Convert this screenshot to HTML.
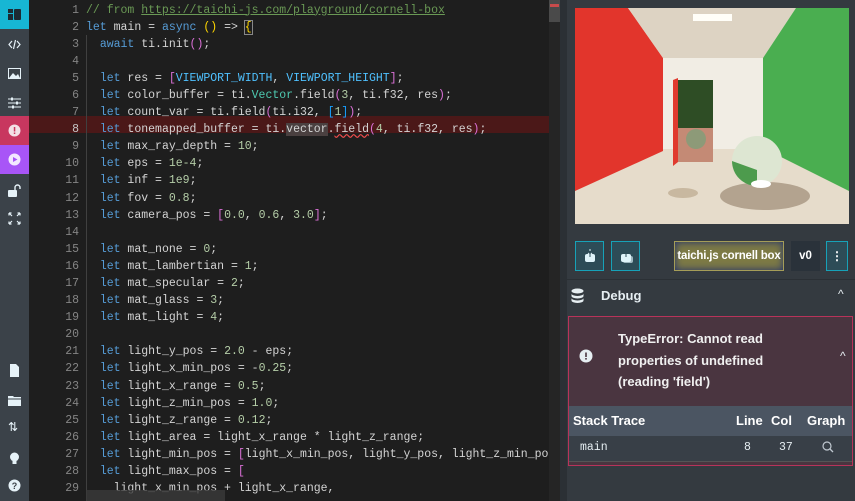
<!DOCTYPE html>
<html><head><meta charset="utf-8"><style>
*{margin:0;padding:0;box-sizing:border-box}
body{width:855px;height:501px;overflow:hidden;background:#1e1e1e;position:relative;font-family:"Liberation Sans",sans-serif}
.side{position:absolute;left:0;top:0;width:29px;height:501px;background:#3b4249}
.tile{position:absolute;left:0;width:29px;height:29px}
.ic{position:absolute;left:8px;width:13px;height:13px;color:#e6f2f8}
.gut{position:absolute;left:29px;top:0;width:50px;height:501px}
.ln{position:absolute;right:0;width:40px;text-align:right;font:11.5px/17.1px "Liberation Mono",monospace;color:#858585}
.code{position:absolute;left:86px;top:1.5px;font:11.5px/17.1px "Liberation Mono",monospace;color:#d4d4d4;white-space:pre}
.k{color:#569cd6}.n{color:#b5cea8}.c{color:#6a9955}.t{color:#4ec9b0}.v{color:#4fc1ff}.y{color:#ffd700}.p{color:#da70d6}.b{color:#179fff}
.panel{position:absolute;left:567px;top:0;width:288px;height:501px;background:#343a40}
.mono{font-family:'Liberation Mono',monospace;font-size:11.5px}
</style></head><body>
<div class="side">
<div class="tile" style="top:0;background:#17b6d4"><svg style="position:absolute;left:8px;top:9px" width="13" height="11"><rect x="0" y="0" width="5" height="4" fill="#1d2a33"/><rect x="0" y="5" width="5" height="6" fill="#1d2a33"/><rect x="6" y="0" width="7" height="11" rx="1" fill="#1d2a33"/></svg></div>
<svg class="ic" style="top:38px" viewBox="0 0 13 13"><path d="M4 3L1 6.5L4 10M9 3L12 6.5L9 10M7.5 2L5.5 11" stroke="#e6f2f8" fill="none" stroke-width="1.2"/></svg>
<svg class="ic" style="top:67px" viewBox="0 0 13 13"><rect x="0.5" y="1.5" width="12" height="10" fill="none" stroke="#e6f2f8"/><path d="M1 11L5 6L8 9L10 7L12 11Z" fill="#e6f2f8"/></svg>
<svg class="ic" style="top:96px" viewBox="0 0 13 13"><path d="M0 3H13M0 7H13M0 11H13" stroke="#e6f2f8"/><rect x="3" y="1.5" width="2" height="3" fill="#e6f2f8"/><rect x="8" y="5.5" width="2" height="3" fill="#e6f2f8"/><rect x="4" y="9.5" width="2" height="3" fill="#e6f2f8"/></svg>
<div class="tile" style="top:116px;background:#c8375f"><svg style="position:absolute;left:8px;top:8px" width="13" height="13"><circle cx="6.5" cy="6.5" r="6" fill="#f3dfe6"/><rect x="5.8" y="3" width="1.5" height="4.5" fill="#c8375f"/><rect x="5.8" y="8.5" width="1.5" height="1.5" fill="#c8375f"/></svg></div>
<div class="tile" style="top:145px;background:#a855f7"><svg style="position:absolute;left:8px;top:8px" width="13" height="13"><circle cx="6.5" cy="6.5" r="6" fill="#f3e8ff"/><path d="M5 4L9.5 6.5L5 9Z" fill="#a855f7"/></svg></div>
<svg class="ic" style="top:184px" viewBox="0 0 13 13"><rect x="0" y="6" width="9" height="7" rx="1" fill="#e6f2f8"/><path d="M7 6V3.5A2.5 2.5 0 0 1 12 3.5V5" stroke="#e6f2f8" fill="none" stroke-width="1.4"/></svg>
<svg class="ic" style="top:212px" viewBox="0 0 13 13"><path d="M1 1L4 4M1 1H3.5M1 1V3.5M12 1L9 4M12 1H9.5M12 1V3.5M1 12L4 9M1 12H3.5M1 12V9.5M12 12L9 9M12 12H9.5M12 12V9.5" stroke="#e6f2f8" fill="none" stroke-width="1.2"/></svg>
<svg class="ic" style="top:364px" viewBox="0 0 13 13"><path d="M2 0H8L11 3V13H2Z" fill="#e6f2f8"/></svg>
<svg class="ic" style="top:394px" viewBox="0 0 13 13"><path d="M0 2H5L6 3H13V12H0Z" fill="#e6f2f8"/><rect x="0" y="4.5" width="13" height="1" fill="#3b4249"/></svg>
<div style="position:absolute;left:8px;top:420px;color:#e6f2f8;font-size:12px">⇅</div>
<svg class="ic" style="top:452px" viewBox="0 0 13 13"><circle cx="6.5" cy="5" r="4.5" fill="#e6f2f8"/><rect x="4.5" y="9" width="4" height="3" fill="#e6f2f8"/></svg>
<svg class="ic" style="top:479px" viewBox="0 0 13 13"><circle cx="6.5" cy="6.5" r="6" fill="#e6f2f8"/><text x="6.5" y="10" font-size="9" font-weight="bold" text-anchor="middle" fill="#3b4249" font-family="Liberation Sans">?</text></svg>
</div>
<div style="position:absolute;left:29px;top:116px;width:531px;height:17px;background:#4b1818"></div>
<div style="position:absolute;left:86px;top:35px;width:1px;height:466px;background:#404040"></div>
<div class="gut">
<div class="ln" style="top:1.5px">1<br>2<br>3<br>4<br>5<br>6<br>7<br><span style="color:#c6c6c6">8</span><br>9<br>10<br>11<br>12<br>13<br>14<br>15<br>16<br>17<br>18<br>19<br>20<br>21<br>22<br>23<br>24<br>25<br>26<br>27<br>28<br>29</div>
</div>
<div class="code"><span class="c">// from <u>https://taichi-js.com/playground/cornell-box</u></span>
<span class="k">let</span> main = <span class="k">async</span> <span class="y">()</span> =&gt; <span class="y" style="outline:1px solid #888">{</span>
  <span class="k">await</span> ti.init<span class="p">()</span>;

  <span class="k">let</span> res = <span class="p">[</span><span class="v">VIEWPORT_WIDTH</span>, <span class="v">VIEWPORT_HEIGHT</span><span class="p">]</span>;
  <span class="k">let</span> color_buffer = ti.<span class="t">Vector</span>.field<span class="p">(</span><span class="n">3</span>, ti.f32, res<span class="p">)</span>;
  <span class="k">let</span> count_var = ti.field<span class="p">(</span>ti.i32, <span class="b">[</span><span class="n">1</span><span class="b">]</span><span class="p">)</span>;
  <span class="k">let</span> tonemapped_buffer = ti.<span style="background:#4a4040">vector</span>.<span style="text-decoration:underline wavy #f14c4c">field</span><span class="p">(</span><span class="n">4</span>, ti.f32, res<span class="p">)</span>;
  <span class="k">let</span> max_ray_depth = <span class="n">10</span>;
  <span class="k">let</span> eps = <span class="n">1e-4</span>;
  <span class="k">let</span> inf = <span class="n">1e9</span>;
  <span class="k">let</span> fov = <span class="n">0.8</span>;
  <span class="k">let</span> camera_pos = <span class="p">[</span><span class="n">0.0</span>, <span class="n">0.6</span>, <span class="n">3.0</span><span class="p">]</span>;

  <span class="k">let</span> mat_none = <span class="n">0</span>;
  <span class="k">let</span> mat_lambertian = <span class="n">1</span>;
  <span class="k">let</span> mat_specular = <span class="n">2</span>;
  <span class="k">let</span> mat_glass = <span class="n">3</span>;
  <span class="k">let</span> mat_light = <span class="n">4</span>;

  <span class="k">let</span> light_y_pos = <span class="n">2.0</span> - eps;
  <span class="k">let</span> light_x_min_pos = -<span class="n">0.25</span>;
  <span class="k">let</span> light_x_range = <span class="n">0.5</span>;
  <span class="k">let</span> light_z_min_pos = <span class="n">1.0</span>;
  <span class="k">let</span> light_z_range = <span class="n">0.12</span>;
  <span class="k">let</span> light_area = light_x_range * light_z_range;
  <span class="k">let</span> light_min_pos = <span class="p">[</span>light_x_min_pos, light_y_pos, light_z_min_pos<span class="p">]</span>;
  <span class="k">let</span> light_max_pos = <span class="p">[</span>
    light_x_min_pos + light_x_range,</div>
<div style="position:absolute;left:86px;top:490px;width:139px;height:11px;background:#3a3a3a;opacity:.8"></div>
<div style="position:absolute;left:549px;top:0;width:11px;height:501px;background:#252525"></div>
<div style="position:absolute;left:549px;top:0;width:11px;height:22px;background:#4a4a4a"></div>
<div style="position:absolute;left:550px;top:4px;width:9px;height:3px;background:#c84b4b"></div>
<div style="position:absolute;left:560px;top:0;width:7px;height:501px;background:#2b3035"></div>
<div class="panel">
<div style="position:absolute;left:8px;top:8px;width:274px;height:216px;overflow:hidden;background:#e6dccb">
<div style="position:absolute;left:0;top:0;width:88px;height:185px;background:#e2352c;clip-path:polygon(0 0,53px 0,88px 50px,88px 143px,0 183px)"></div>
<div style="position:absolute;left:53px;top:0;width:168px;height:50px;background:#ddd3c3;clip-path:polygon(0 0,168px 0,135px 50px,35px 50px)"></div>
<div style="position:absolute;left:188px;top:0;width:86px;height:185px;background:#4aae50;clip-path:polygon(33px 0,86px 0,86px 183px,0 140px,0 50px)"></div>
<svg style="position:absolute;left:0;top:0" width="274" height="216" viewBox="0 0 274 216">
<rect x="88" y="50" width="100" height="91" fill="#f1ede4"/>
<rect x="103" y="72" width="35" height="82" fill="#2e4d25"/>
<rect x="103" y="120" width="35" height="34" fill="#c48a75"/>
<path d="M98 72L103 70V154L98 158Z" fill="#e03a2e"/>
<circle cx="121" cy="131" r="10" fill="#8d9a78"/>
<rect x="118" y="6" width="39" height="7" fill="#fffef8"/>
<ellipse cx="108" cy="185" rx="15" ry="5" fill="#c8b8a0"/>
<ellipse cx="190" cy="188" rx="45" ry="14" fill="#9c8a75" opacity=".7"/>
<circle cx="182" cy="153" r="25" fill="#dde6d2"/>
<path d="M157 153A25 25 0 0 0 182 178L182 162Z" fill="#4d9b4d"/>
<ellipse cx="186" cy="176" rx="10" ry="4" fill="#ffffff"/>
</svg>
</div>
<div style="position:absolute;left:8px;top:241px;width:29px;height:30px;border:1px solid #17a2b8;background:#2d4c57"><svg style="position:absolute;left:8px;top:7px" width="12" height="14"><path d="M6 0V6M4 4L6 6L8 4" stroke="#dff4fa" fill="none"/><rect x="1" y="5" width="10" height="8" rx="2" fill="#dff4fa"/><path d="M6 2V8" stroke="#2d4c57"/></svg></div>
<div style="position:absolute;left:44px;top:241px;width:29px;height:30px;border:1px solid #17a2b8;background:#2d4c57"><svg style="position:absolute;left:8px;top:7px" width="13" height="14"><rect x="3" y="7" width="10" height="7" rx="2" fill="#9fb8c0"/><rect x="1" y="5" width="10" height="8" rx="2" fill="#dff4fa"/><path d="M6 0V8" stroke="#2d4c57"/></svg></div>
<div style="position:absolute;left:107px;top:241px;width:110px;height:30px;background:#7d7a45;box-shadow:inset 0 0 8px #1e2d6e;border:1px solid #a59d58;color:#fff;font-size:11.5px;line-height:28px;text-align:center;font-weight:bold;letter-spacing:-0.2px">taichi.js cornell box</div>
<div style="position:absolute;left:224px;top:241px;width:29px;height:30px;background:#2a323a;color:#fff;font-size:11.5px;font-weight:bold;line-height:30px;text-align:center">v0</div>
<div style="position:absolute;left:259px;top:241px;width:22px;height:30px;border:1px solid #17a2b8;background:#2d4c57;color:#fff;text-align:center;line-height:28px;font-size:12px;font-weight:bold">⋮</div>
<div style="position:absolute;left:0;top:279px;width:288px;height:1px;background:#2b3035"></div>
<svg style="position:absolute;left:4px;top:288px" width="13" height="16"><ellipse cx="6.5" cy="3" rx="6" ry="2.5" fill="#e6eef2"/><path d="M0.5 5.5a6 2.5 0 0 0 12 0V8a6 2.5 0 0 1-12 0Z M0.5 10a6 2.5 0 0 0 12 0V12.5a6 2.5 0 0 1-12 0Z" fill="#e6eef2"/></svg>
<div style="position:absolute;left:34px;top:288px;color:#e6eef2;font-size:13px;font-weight:bold">Debug</div>
<div style="position:absolute;left:271px;top:287px;color:#e6eef2;font-size:12px">^</div>
<div style="position:absolute;left:1px;top:316px;width:285px;height:150px;border:1px solid #b8335a;background:#4a3540"></div>
<svg style="position:absolute;left:12px;top:349px" width="14" height="14"><circle cx="7" cy="7" r="6.5" fill="#e6eef2"/><rect x="6.2" y="3.5" width="1.6" height="4.5" fill="#4a3540"/><rect x="6.2" y="9" width="1.6" height="1.6" fill="#4a3540"/></svg>
<div style="position:absolute;left:51px;top:328px;color:#f0f0f0;font-size:13px;font-weight:bold;line-height:21.5px">TypeError: Cannot read<br>properties of undefined<br>(reading 'field')</div>
<div style="position:absolute;left:273px;top:349px;color:#e6eef2;font-size:12px">^</div>
<div style="position:absolute;left:2px;top:406px;width:283px;height:30px;background:#4b5562"></div>
<div style="position:absolute;left:6px;top:413px;color:#fff;font-size:13px;font-weight:bold">Stack Trace</div>
<div style="position:absolute;left:169px;top:413px;color:#fff;font-size:13px;font-weight:bold">Line</div>
<div style="position:absolute;left:204px;top:413px;color:#fff;font-size:13px;font-weight:bold">Col</div>
<div style="position:absolute;left:240px;top:413px;color:#fff;font-size:13px;font-weight:bold">Graph</div>
<div style="position:absolute;left:2px;top:436px;width:283px;height:26px;background:#383f47;border-bottom:1px solid #555"></div>
<div class="mono" style="position:absolute;left:13px;top:441px;color:#e6eef2">main</div>
<div class="mono" style="position:absolute;left:177px;top:441px;color:#e6eef2">8</div>
<div class="mono" style="position:absolute;left:212px;top:441px;color:#e6eef2">37</div>
<svg style="position:absolute;left:255px;top:441px" width="12" height="12"><circle cx="5" cy="5" r="4" stroke="#c0c8d0" fill="none" stroke-width="1.2"/><path d="M8 8L11 11" stroke="#c0c8d0" stroke-width="1.3"/></svg>
</div>
</body></html>
